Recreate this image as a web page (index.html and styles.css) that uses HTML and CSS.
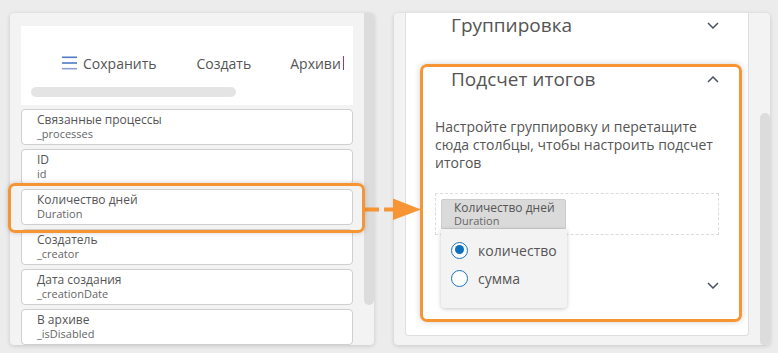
FILE: index.html
```html
<!DOCTYPE html>
<html lang="ru">
<head>
<meta charset="utf-8">
<title>Подсчет итогов</title>
<link rel="stylesheet" href="styles.css">
</head>
<body>
<div class="page">
  <section class="panel panel-left">
    <div class="left-col">
      <div class="header">
        <div class="toolbar">
          <span class="tb-item tb-save">
            <svg class="burger" width="15" height="14" viewBox="0 0 15 14"><rect x="0" y="0.5" width="15" height="1.6" fill="#4f7cc4"/><rect x="0" y="6.2" width="15" height="1.6" fill="#4f7cc4"/><rect x="0" y="11.9" width="15" height="1.6" fill="#8f9fd6"/></svg>
            Сохранить
          </span>
          <span class="tb-item tb-create">Создать</span>
          <span class="tb-item tb-archive">Архиви<span class="caret"></span></span>
        </div>
        <div class="hscroll"></div>
      </div>
      <div class="fields">
        <div class="field"><div class="f-title">Связанные процессы</div><div class="f-sub">_processes</div></div>
        <div class="field"><div class="f-title">ID</div><div class="f-sub">id</div></div>
        <div class="highlight">
          <div class="field"><div class="f-title">Количество дней</div><div class="f-sub">Duration</div></div>
        </div>
        <div class="field"><div class="f-title">Создатель</div><div class="f-sub">_creator</div></div>
        <div class="field"><div class="f-title">Дата создания</div><div class="f-sub">_creationDate</div></div>
        <div class="field"><div class="f-title">В архиве</div><div class="f-sub">_isDisabled</div></div>
      </div>
    </div>
    <div class="vscroll vscroll-left"></div>
  </section>

  <section class="panel panel-right">
    <div class="card">
      <div class="sec-row sec-group">
        <span class="sec-title">Группировка</span>
        <svg class="chev" width="12" height="7" viewBox="0 0 12 7"><path d="M1 1 L6 6 L11 1" fill="none" stroke="#4a5260" stroke-width="1.5"/></svg>
      </div>
      <div class="totals">
        <div class="sec-row sec-totals">
          <span class="sec-title">Подсчет итогов</span>
          <svg class="chev" width="12" height="7" viewBox="0 0 12 7"><path d="M1 6 L6 1 L11 6" fill="none" stroke="#4a5260" stroke-width="1.5"/></svg>
        </div>
        <p class="hint">Настройте группировку и перетащите сюда столбцы, чтобы настроить подсчет итогов</p>
        <div class="dropzone">
          <div class="chip"><div class="f-title">Количество дней</div><div class="f-sub">Duration</div></div>
          <div class="menu">
            <label class="opt"><span class="radio checked"></span>количество</label>
            <label class="opt"><span class="radio"></span>сумма</label>
          </div>
        </div>
        <div class="sec-row sec-next">
          <span class="sec-title"></span>
          <svg class="chev" width="12" height="7" viewBox="0 0 12 7"><path d="M1 1 L6 6 L11 1" fill="none" stroke="#4a5260" stroke-width="1.5"/></svg>
        </div>
      </div>
    </div>
    <div class="vscroll vscroll-right"></div>
  </section>

  <svg class="arrow" width="60" height="24" viewBox="0 0 60 24"><rect x="0" y="10.5" width="16" height="4" fill="#f79433"/><rect x="21" y="10.5" width="9" height="4" fill="#f79433"/><polygon points="30,1.5 58,12.5 30,23" fill="#f79433"/></svg>
</div>
</body>
</html>
```

FILE: styles.css
```css
* { box-sizing: border-box; }
html, body { margin: 0; padding: 0; }
body {
  width: 778px;
  height: 353px;
  overflow: hidden;
  background: #ececec;
  font-family: "Open Sans", "Noto Sans", sans-serif;
  color: #555;
}
.page {
  position: relative;
  display: flex;
  gap: 20px;
  padding: 13px 8px 8px 10px;
  height: 353px;
}
.panel {
  display: flex;
  background: #f3f3f3;
  border-radius: 4px;
  box-shadow: 0 1px 4px rgba(0,0,0,0.16);
  height: 332px;
}
.panel-left { width: 364px; }
.panel-right { width: 376px; }

.left-col {
  width: 332px;
  margin-left: 11px;
  padding-top: 13px;
}
.header {
  background: #fff;
  height: 79px;
  padding-top: 28px;
  overflow: hidden;
}
.toolbar {
  display: flex;
  align-items: center;
  height: 18px;
  padding-left: 41px;
  font-size: 14px;
  white-space: nowrap;
}
.tb-item { display: inline-flex; align-items: center; color: #555; }
.burger { margin-right: 6px; }
.tb-create { margin-left: 40px; }
.tb-archive { margin-left: 39px; }
.caret {
  display: inline-block;
  width: 1px;
  height: 14px;
  margin-left: 2px;
  background: #b8325a;
}
.hscroll {
  margin: 15px 0 0 10px;
  width: 205px;
  height: 10px;
  border-radius: 5px;
  background: #e4e4e4;
}
.fields {
  display: flex;
  flex-direction: column;
  gap: 4px;
  margin-top: 4px;
}
.field {
  height: 36px;
  background: #fff;
  border: 1px solid #cfcfcf;
  border-radius: 4px;
  padding: 3px 15px 0;
}
.f-title { font-size: 12px; line-height: 14px; color: #555; white-space: nowrap; }
.f-sub { font-size: 11px; line-height: 13px; color: #666; white-space: nowrap; }
.highlight {
  position: relative;
  z-index: 1;
  margin: -6px -12px -8px -13px;
  padding: 3px 9px 5px 10px;
  border: 3px solid #f79433;
  border-radius: 7px;
  box-shadow: 0 0 5px rgba(0,0,0,0.18);
}
.vscroll { width: 10px; background: #dcdcdc; }
.vscroll-left {
  margin-left: 11px;
  height: 292px;
  border-radius: 0 4px 5px 5px;
}

.card {
  width: 344px;
  height: 323px;
  margin-left: 11px;
  background: #fff;
  border: 1px solid #dedede;
  border-top: none;
  border-radius: 0 0 4px 4px;
  padding: 0 6px 0 14px;
}
.sec-row {
  display: flex;
  align-items: center;
  justify-content: space-between;
  height: 24px;
}
.sec-title { font-size: 19px; line-height: 24px; color: #555; white-space: nowrap; }
.sec-group { padding: 0 23px 0 31px; }
.totals {
  margin-top: 27px;
  height: 258px;
  border: 3px solid #f79433;
  border-radius: 7px;
  box-shadow: 0 0 6px rgba(0,0,0,0.18);
  padding: 0 20px 0 12px;
}
.sec-totals { padding-left: 16px; }
.hint {
  margin: 27px 0 0;
  font-size: 14px;
  line-height: 18px;
  color: #555;
}
.dropzone {
  position: relative;
  margin-top: 21px;
  height: 42px;
  border: 1px dashed #dcdcdc;
  padding: 5px;
}
.chip {
  width: 125px;
  height: 30px;
  background: #dadada;
  border: 1px solid #cccccc;
  border-radius: 2px 2px 0 0;
  padding: 1px 0 0 12px;
}
.chip .f-title { line-height: 13px; }
.menu {
  position: absolute;
  left: 5px;
  top: 35px;
  width: 126px;
  height: 79px;
  background: #f3f3f3;
  border-radius: 0 0 4px 4px;
  box-shadow: 0 1px 4px rgba(0,0,0,0.22);
  padding: 7px 0 0 10px;
  z-index: 2;
}
.opt {
  display: flex;
  align-items: center;
  gap: 10px;
  height: 28px;
  font-size: 14px;
  color: #555;
}
.radio {
  width: 17px;
  height: 17px;
  border-radius: 50%;
  border: 1.5px solid #1a73c2;
  background: #fff;
  position: relative;
  flex: none;
}
.radio.checked::after {
  content: "";
  position: absolute;
  left: 2.5px;
  top: 2.5px;
  width: 9px;
  height: 9px;
  border-radius: 50%;
  background: #0c6fc0;
}
.sec-next { margin-top: 38px; }

.vscroll-right {
  margin-left: 11px;
  margin-top: 100px;
  height: 232px;
  border-radius: 5px 5px 4px 4px;
}
.arrow {
  position: absolute;
  left: 363px;
  top: 197px;
}
```
